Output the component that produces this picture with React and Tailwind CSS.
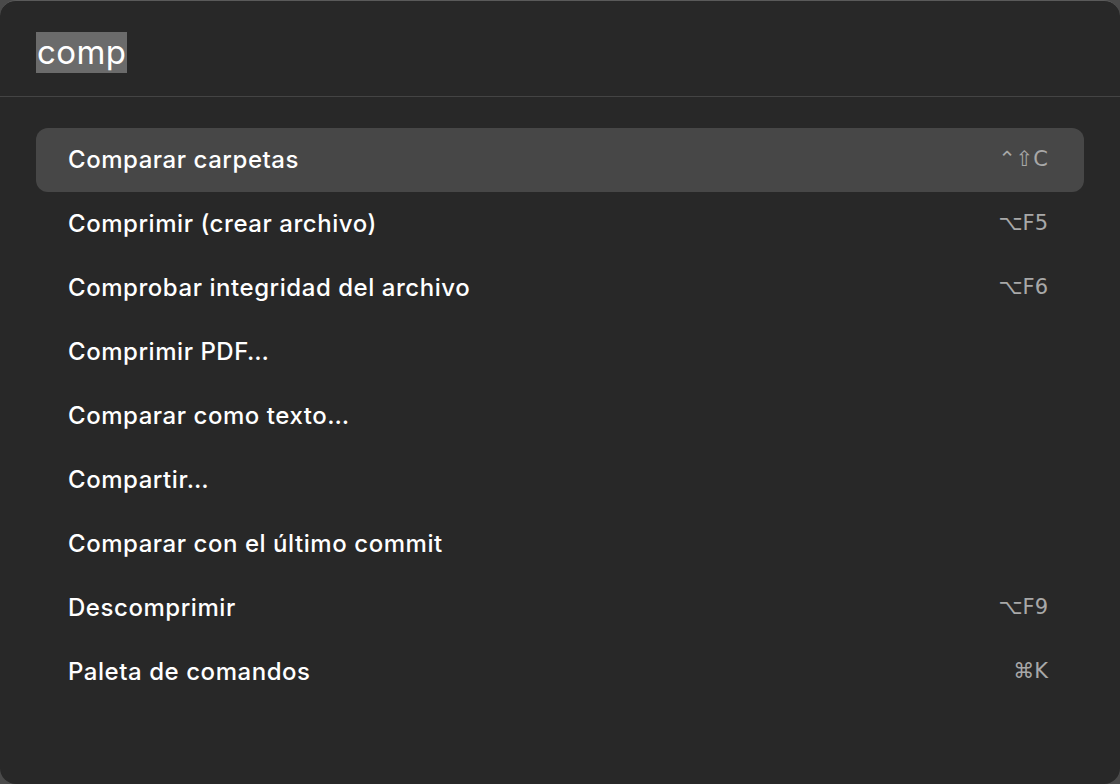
import React from "react";

const ITEMS = [
  { label: "Comparar carpetas", keys: "⌃⇧C", active: true },
  { label: "Comprimir (crear archivo)", keys: "⌥F5" },
  { label: "Comprobar integridad del archivo", keys: "⌥F6" },
  { label: "Comprimir PDF…" },
  { label: "Comparar como texto…" },
  { label: "Compartir…" },
  { label: "Comparar con el último commit" },
  { label: "Descomprimir", keys: "⌥F9" },
  { label: "Paleta de comandos", keys: "⌘K" },
];

export default function App() {
  return (
    <div
      className="w-[1120px] h-[784px] bg-[#4a4a4a]"
      style={{ fontFamily: "Inter, 'Noto Sans', 'DejaVu Sans', sans-serif" }}
    >
      <div className="w-full h-full rounded-[16px] bg-[#282828] border-t border-[#5a5a5a] flex flex-col overflow-hidden">
        {/* search field */}
        <div className="h-[96px] flex items-start pt-[31px] px-[36px] border-b border-[#444444]">
          <span className="bg-[#6b6b6b] text-white text-[33px] leading-[41px] pl-[1px] pr-[1px] tracking-[0.4px]">
            comp
          </span>
        </div>

        {/* results */}
        <div className="flex flex-col px-[36px] pt-[31px]">
          {ITEMS.map((item) => (
            <div
              key={item.label}
              className={
                "h-[64px] flex items-center justify-between pl-[32px] pr-[36px] rounded-[12px] " +
                (item.active ? "bg-[#474747]" : "")
              }
            >
              <span className="text-[24px] font-medium text-white tracking-[0.55px]">
                {item.label}
              </span>
              {item.keys && (
                <span
                  className="text-[21px] text-[#a8a8a8]"
                  style={{ fontFamily: "'DejaVu Sans', sans-serif" }}
                >
                  {item.keys}
                </span>
              )}
            </div>
          ))}
        </div>
      </div>
    </div>
  );
}
